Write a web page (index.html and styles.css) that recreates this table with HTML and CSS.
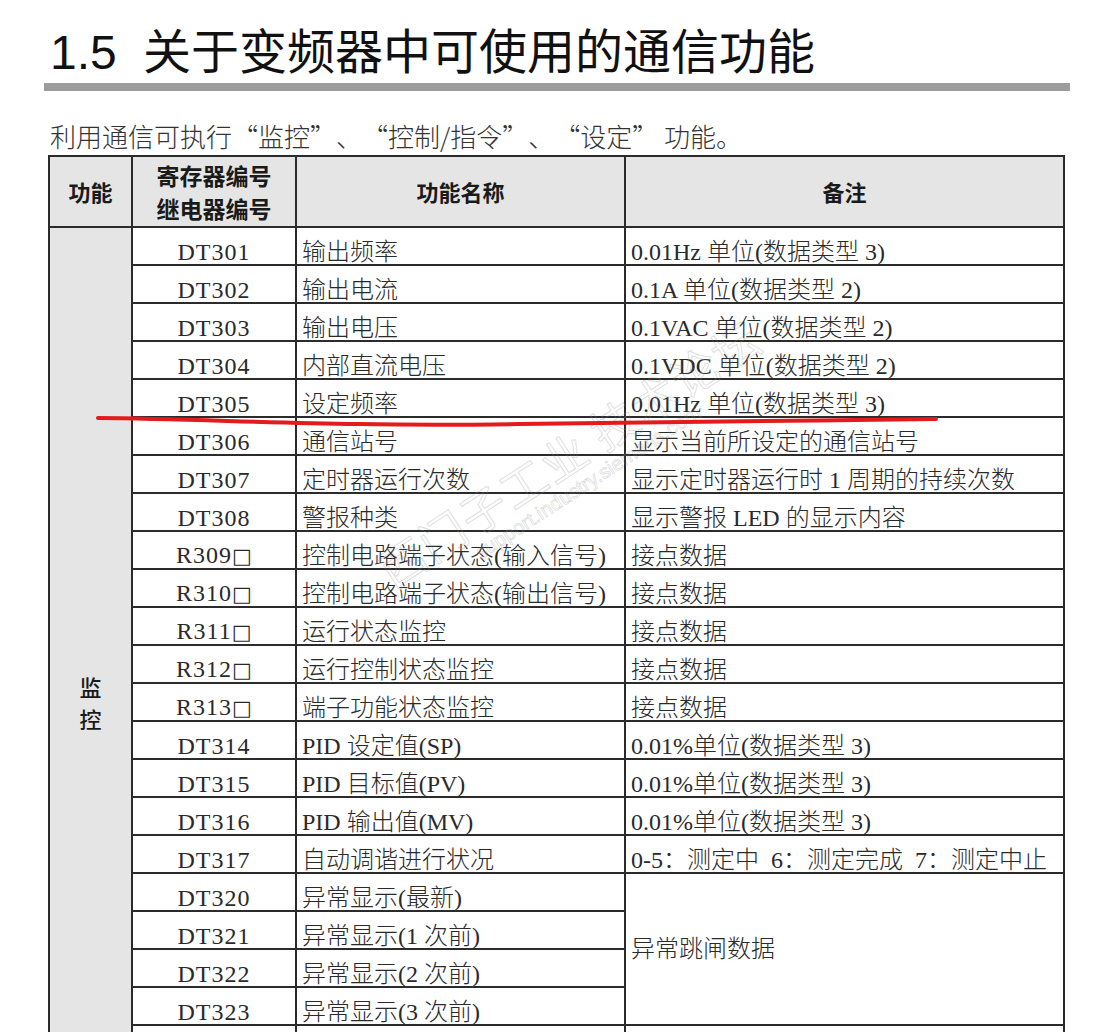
FILE: index.html
```html
<!DOCTYPE html>
<html lang="zh-CN">
<head>
<meta charset="utf-8">
<title>1.5 关于变频器中可使用的通信功能</title>
<link rel="stylesheet" href="styles.css">
</head>
<body>
<div class="page">
  <h1 class="title"><span class="num">1.5</span> 关于变频器中可使用的通信功能</h1>
  <div class="rule"></div>
  <p class="intro">利用通信可执行<span class="ql">“</span>监控<span class="qr">”</span>、<span class="ql">“</span>控制/指令<span class="qr">”</span>、<span class="ql">“</span>设定<span class="qr">”</span> 功能。</p>
  <table class="spec">
    <colgroup>
      <col class="c1"><col class="c2"><col class="c3"><col class="c4">
    </colgroup>
    <thead>
      <tr>
        <th>功能</th>
        <th class="two">寄存器编号<br>继电器编号</th>
        <th>功能名称</th>
        <th>备注</th>
      </tr>
    </thead>
    <tbody>
      <tr><td class="group" rowspan="25">监<br>控</td><td class="reg">DT301</td><td>输出频率</td><td>0.01Hz 单位(数据类型 3)</td></tr>
      <tr><td class="reg">DT302</td><td>输出电流</td><td>0.1A 单位(数据类型 2)</td></tr>
      <tr><td class="reg">DT303</td><td>输出电压</td><td>0.1VAC 单位(数据类型 2)</td></tr>
      <tr><td class="reg">DT304</td><td>内部直流电压</td><td>0.1VDC 单位(数据类型 2)</td></tr>
      <tr><td class="reg">DT305</td><td>设定频率</td><td>0.01Hz 单位(数据类型 3)</td></tr>
      <tr><td class="reg">DT306</td><td>通信站号</td><td>显示当前所设定的通信站号</td></tr>
      <tr><td class="reg">DT307</td><td>定时器运行次数</td><td>显示定时器运行时 1 周期的持续次数</td></tr>
      <tr><td class="reg">DT308</td><td>警报种类</td><td>显示警报 LED 的显示内容</td></tr>
      <tr><td class="reg">R309<span class="box">□</span></td><td>控制电路端子状态(输入信号)</td><td>接点数据</td></tr>
      <tr><td class="reg">R310<span class="box">□</span></td><td>控制电路端子状态(输出信号)</td><td>接点数据</td></tr>
      <tr><td class="reg">R311<span class="box">□</span></td><td>运行状态监控</td><td>接点数据</td></tr>
      <tr><td class="reg">R312<span class="box">□</span></td><td>运行控制状态监控</td><td>接点数据</td></tr>
      <tr><td class="reg">R313<span class="box">□</span></td><td>端子功能状态监控</td><td>接点数据</td></tr>
      <tr><td class="reg">DT314</td><td>PID 设定值(SP)</td><td>0.01%单位(数据类型 3)</td></tr>
      <tr><td class="reg">DT315</td><td>PID 目标值(PV)</td><td>0.01%单位(数据类型 3)</td></tr>
      <tr><td class="reg">DT316</td><td>PID 输出值(MV)</td><td>0.01%单位(数据类型 3)</td></tr>
      <tr><td class="reg">DT317</td><td>自动调谐进行状况</td><td>0-5：测定中&nbsp;&nbsp;6：测定完成&nbsp;&nbsp;7：测定中止</td></tr>
      <tr><td class="reg">DT320</td><td>异常显示(最新)</td><td class="trip" rowspan="4">异常跳闸数据</td></tr>
      <tr><td class="reg">DT321</td><td>异常显示(1 次前)</td></tr>
      <tr><td class="reg">DT322</td><td>异常显示(2 次前)</td></tr>
      <tr><td class="reg">DT323</td><td>异常显示(3 次前)</td></tr>
      <tr><td class="reg">DT324</td><td>累计运行时间</td><td>1h 单位</td></tr>
      <tr><td class="reg">DT325</td><td>散热片温度</td><td>1℃单位</td></tr>
      <tr><td class="reg">DT326</td><td>输出转矩</td><td>0.1% 单位</td></tr>
      <tr><td class="reg">DT327</td><td>输入电力</td><td>0.01kW 单位</td></tr>
    </tbody>
  </table>
</div>

<div class="watermark">
  <span class="wm-main">西门子工业 技术论坛</span>
  <span class="wm-sub">support.industry.siemens.com</span>
</div>

<svg class="markup" width="1098" height="1032" viewBox="0 0 1098 1032" aria-hidden="true">
  <path d="M98 418 C 220 419, 330 427, 520 424 S 800 421, 936 419" fill="none" stroke="#e31b1d" stroke-width="4" stroke-linecap="round"/>
</svg>
</body>
</html>
```

FILE: styles.css
```css
html, body {
  margin: 0;
  padding: 0;
  background: #ffffff;
}

body {
  position: relative;
  width: 1098px;
  height: 1032px;
  overflow: hidden;
  color: #262626;
}

.page {
  padding-left: 44px;
}

.title {
  margin: 25px 0 0 6px;
  font-family: "Liberation Sans", "Noto Sans CJK SC", sans-serif;
  font-weight: 400;
  font-size: 48px;
  line-height: 56px;
  color: #111;
  white-space: nowrap;
}

.title .num {
  margin-right: 13px;
}

.rule {
  width: 1026px;
  height: 8px;
  margin-top: 2px;
  background: #9c9c9c;
}

.intro {
  margin: 29px 0 0 6px;
  font-family: "Noto Sans CJK SC", sans-serif;
  font-weight: 300;
  font-size: 26px;
  line-height: 32px;
  color: #333;
  white-space: nowrap;
}

.intro .ql,
.intro .qr {
  display: inline-block;
  width: 1em;
}

.intro .ql {
  text-align: right;
}

.intro .qr {
  text-align: left;
}

.spec {
  margin: 3px 0 0 4px;
  width: 1015px;
  table-layout: fixed;
  border-collapse: collapse;
  font-family: "Liberation Serif", "Noto Sans CJK SC", serif;
  font-size: 24px;
  color: #2a2a2a;
}

.spec col.c1 { width: 83px; }
.spec col.c2 { width: 164px; }
.spec col.c3 { width: 329px; }
.spec col.c4 { width: 439px; }

.spec th,
.spec td {
  border: 2px solid #2b2b2b;
}

.spec th {
  height: 69px;
  padding: 0;
  background: #e5e5e5;
  font-family: "Noto Sans CJK SC", sans-serif;
  font-weight: 700;
  font-size: 22px;
  line-height: 33px;
  color: #1a1a1a;
}

.spec th.two {
  font-size: 23px;
}

.spec td {
  height: 35px;
  padding: 0 6px 1px 5px;
  line-height: 22px;
  vertical-align: bottom;
  white-space: nowrap;
  overflow: hidden;
  font-weight: 300;
}

.spec td.reg {
  text-align: center;
  letter-spacing: 1px;
  font-weight: 400;
  padding-left: 0;
  padding-right: 0;
}

.spec td.group {
  background: #e5e5e5;
  text-align: center;
  vertical-align: middle;
  font-family: "Noto Sans CJK SC", sans-serif;
  font-weight: 500;
  font-size: 22px;
  line-height: 32px;
  color: #1a1a1a;
  padding: 0;
}

.spec td.trip {
  vertical-align: middle;
}

.box {
  font-family: "DejaVu Sans", sans-serif;
  font-size: 21px;
  letter-spacing: 0;
}

.watermark {
  position: absolute;
  left: 388px;
  top: 546px;
  transform: rotate(-33deg);
  transform-origin: 0 50%;
  pointer-events: none;
  display: flex;
  flex-direction: column;
  white-space: nowrap;
}

.wm-main {
  font-family: "Noto Sans CJK SC", sans-serif;
  font-size: 46px;
  line-height: 50px;
  letter-spacing: 2px;
  color: transparent;
  -webkit-text-stroke: 1px rgba(140, 140, 140, 0.3);
}

.wm-sub {
  margin-left: 90px;
  font-family: "Liberation Sans", sans-serif;
  font-size: 20px;
  line-height: 22px;
  color: transparent;
  -webkit-text-stroke: 0.8px rgba(140, 140, 140, 0.3);
}

.markup {
  position: absolute;
  left: 0;
  top: 0;
  pointer-events: none;
}
```
